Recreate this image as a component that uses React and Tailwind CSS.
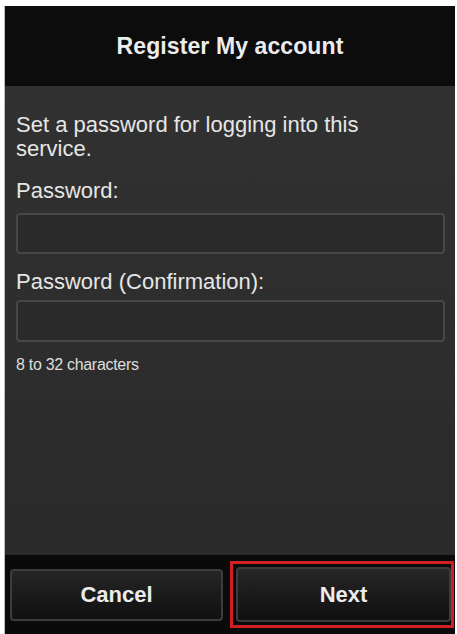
export default function App() {
  const font = { fontFamily: '"Liberation Sans", Arial, sans-serif' };
  return (
    <div className="w-[457px] h-[634px] bg-white pt-[6px] pl-[5px] pr-[2px] overflow-hidden" style={font}>
      <div className="flex flex-col h-full border-l border-[#bdbdbd] -ml-px">
        <header className="h-[80px] shrink-0 bg-[#0c0c0c] flex items-center justify-center">
          <h1 className="text-[23px] font-bold text-[#ececec] tracking-[0.1px]">Register My account</h1>
        </header>

        <main className="flex-1 bg-gradient-to-b from-[#313131] to-[#2a2a2a] pl-[11px] pr-[10px] pt-[27px] text-[#e6e6e6]">
          <p className="text-[22px] leading-[24px] w-[400px]">Set a password for logging into this service.</p>

          <label className="block text-[22px] leading-[24px] mt-[18px]">Password:</label>
          <input
            type="password"
            className="block w-full h-[41px] mt-[10px] bg-[#2a2a2a] border-2 border-[#474747] rounded-[4px] outline-none"
          />

          <label className="block text-[22px] leading-[24px] mt-[16px]">Password (Confirmation):</label>
          <input
            type="password"
            className="block w-full h-[42px] mt-[6px] bg-[#2a2a2a] border-2 border-[#474747] rounded-[4px] outline-none"
          />

          <p className="text-[16px] leading-[20px] mt-[13px] text-[#dedede] tracking-[-0.3px]">8 to 32 characters</p>
        </main>

        <footer className="h-[79px] shrink-0 bg-[#0a0a0a] flex items-center gap-[7px] pl-[5px] pr-[1px]">
          <button className="w-[213px] h-[52px] rounded-[4px] border-2 border-[#3c3c3c] bg-gradient-to-b from-[#262626] to-[#101010] text-[22px] font-bold text-[#ececec]">
            Cancel
          </button>
          <div className="flex-1 h-[67px] border-[3px] border-[#d11f26] pl-[3px] py-[3px] flex">
            <button className="flex-1 h-full rounded-[4px] border-2 border-[#3c3c3c] bg-gradient-to-b from-[#262626] to-[#101010] text-[22px] font-bold text-[#ececec]">
              Next
            </button>
          </div>
        </footer>
      </div>
    </div>
  );
}
